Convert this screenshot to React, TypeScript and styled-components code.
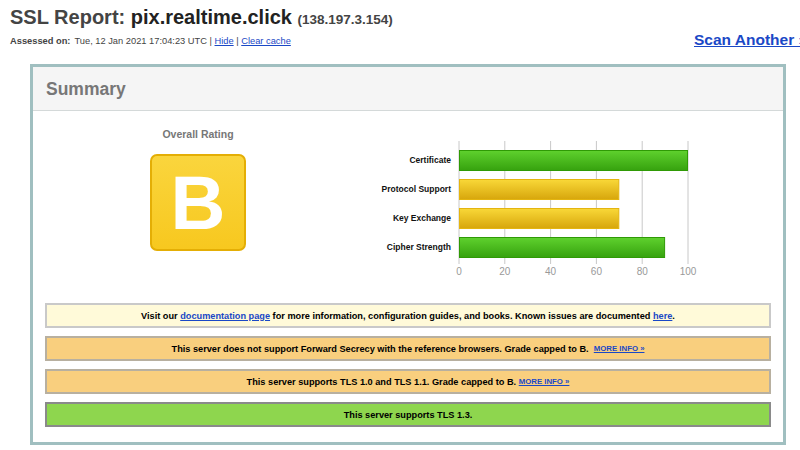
import React from 'react';
import styled, { createGlobalStyle } from 'styled-components';

const GlobalStyle = createGlobalStyle`
  html, body {
    margin: 0;
    padding: 0;
    overflow: hidden;
    background: #fff;
    font-family: "Liberation Sans", Arial, sans-serif;
  }
`;

const Page = styled.div`
  width: 820px;
  padding: 6px 0 0 10px;
`;

const TopBar = styled.div`
  display: flex;
  align-items: flex-start;
`;

const TitleBlock = styled.div`
  display: flex;
  flex-direction: column;
`;

const Title = styled.h1`
  margin: 0;
  font-size: 20px;
  line-height: 22px;
  font-weight: bold;
  color: #222;
`;

const TitleLead = styled.span`
  color: #444;
`;

const Ip = styled.span`
  font-size: 13.5px;
  color: #444;
`;

const Assessed = styled.div`
  margin-top: 5px;
  font-size: 9.3px;
  color: #444;

  b {
    margin-right: 4px;
  }
`;

const SmallLink = styled.a`
  color: #1a48c6;
  text-decoration: underline;
`;

const ScanAnother = styled.a`
  margin: 25px 0 0 auto;
  width: 136px;
  white-space: nowrap;
  font-size: 15.5px;
  font-weight: bold;
  color: #1a48c6;
  text-decoration: underline;
`;

const SummaryBox = styled.section`
  margin: 15px 0 0 20px;
  width: 750px;
  border: 3px solid #a0bfc0;
  background: #fff;
`;

const SummaryHead = styled.div`
  height: 44px;
  display: flex;
  align-items: center;
  padding: 2px 0 0 13px;
  box-sizing: border-box;
  background: #f5f5f5;
  border-bottom: 1px solid #d4d9d9;
  font-size: 17.5px;
  font-weight: bold;
  color: #777;
`;

const SummaryBody = styled.div`
  padding: 17px 12px 15px 12px;
`;

const TopRow = styled.div`
  display: flex;
  align-items: flex-start;
`;

const RatingColumn = styled.div`
  width: 306px;
  display: flex;
  flex-direction: column;
  align-items: center;
`;

const RatingLabel = styled.div`
  font-size: 10.5px;
  font-weight: bold;
  color: #777;
  line-height: 13px;
`;

const Grade = styled.div<{ $color: string; $edge: string }>`
  margin-top: 13px;
  width: 92px;
  height: 93px;
  border: 2px solid ${(p) => p.$edge};
  border-radius: 7px;
  background: ${(p) => p.$color};
  display: flex;
  align-items: center;
  justify-content: center;
  color: #fff;
  font-size: 76px;
  font-weight: bold;
  line-height: 1;
`;

const ChartWrap = styled.div`
  margin-top: 6px;
`;

const Notices = styled.div`
  margin-top: 20px;
  display: flex;
  flex-direction: column;
  gap: 8px;
`;

const Notice = styled.div<{ $bg: string; $edge: string }>`
  height: 21px;
  display: flex;
  align-items: center;
  justify-content: center;
  background: ${(p) => p.$bg};
  border: 2px solid ${(p) => p.$edge};
  font-size: 9.2px;
  font-weight: bold;
  color: #000;
  white-space: pre;
`;

const MoreInfo = styled.a`
  font-size: 7.8px;
  color: #1a48c6;
  text-decoration: underline;
`;

const bars = [
  { label: 'Certificate', value: 100, tone: 'green' },
  { label: 'Protocol Support', value: 70, tone: 'yellow' },
  { label: 'Key Exchange', value: 70, tone: 'yellow' },
  { label: 'Cipher Strength', value: 90, tone: 'green' },
];

const Chart = () => {
  const x0 = 108;
  const scale = 2.29;
  const ticks = [0, 20, 40, 60, 80, 100];
  return (
    <svg width="360" height="145" viewBox="0 0 360 145">
      <defs>
        <linearGradient id="g-green" x1="0" y1="0" x2="0" y2="1">
          <stop offset="0" stopColor="#5fd12e" />
          <stop offset="1" stopColor="#36a20e" />
        </linearGradient>
        <linearGradient id="g-yellow" x1="0" y1="0" x2="0" y2="1">
          <stop offset="0" stopColor="#f9d838" />
          <stop offset="1" stopColor="#d7a60c" />
        </linearGradient>
      </defs>
      {ticks.map((t) => {
        const x = x0 + t * scale;
        return (
          <g key={t}>
            <line x1={x} y1={7} x2={x} y2={130} stroke="#c8c8c8" strokeWidth="1" />
            <text
              x={x}
              y={141}
              textAnchor="middle"
              fontSize="10"
              fill="#999"
              fontFamily="Liberation Sans, Arial, sans-serif"
            >
              {t}
            </text>
          </g>
        );
      })}
      {bars.map((b, i) => {
        const y = 16 + i * 29;
        const green = b.tone === 'green';
        return (
          <g key={b.label}>
            <text
              x={x0 - 8}
              y={y + 13}
              textAnchor="end"
              fontSize="8.5"
              fontWeight="bold"
              fill="#111"
              fontFamily="Liberation Sans, Arial, sans-serif"
            >
              {b.label}
            </text>
            <rect
              x={x0 + 0.5}
              y={y + 0.5}
              width={b.value * scale - 1}
              height={20}
              fill={green ? 'url(#g-green)' : 'url(#g-yellow)'}
              stroke={green ? '#2f9a05' : '#e4b510'}
              strokeWidth="1"
            />
          </g>
        );
      })}
    </svg>
  );
};

export default function App() {
  return (
    <>
      <GlobalStyle />
      <Page>
        <TopBar>
          <TitleBlock>
            <Title>
              <TitleLead>SSL Report:</TitleLead> pix.realtime.click <Ip>(138.197.3.154)</Ip>
            </Title>
            <Assessed>
              <b>Assessed on:</b>Tue, 12 Jan 2021 17:04:23 UTC | <SmallLink href="#">Hide</SmallLink> |{' '}
              <SmallLink href="#">Clear cache</SmallLink>
            </Assessed>
          </TitleBlock>
          <ScanAnother href="#">Scan Another »</ScanAnother>
        </TopBar>

        <SummaryBox>
          <SummaryHead>Summary</SummaryHead>
          <SummaryBody>
            <TopRow>
              <RatingColumn>
                <RatingLabel>Overall Rating</RatingLabel>
                <Grade
                  $color="linear-gradient(180deg, #fad53d 0%, #f7c81f 100%)"
                  $edge="#e4ae05"
                >
                  B
                </Grade>
              </RatingColumn>
              <ChartWrap>
                <Chart />
              </ChartWrap>
            </TopRow>

            <Notices>
              <Notice $bg="#fffad9" $edge="#c9c9c9">
                Visit our <SmallLink href="#">documentation page</SmallLink> for more information,
                configuration guides, and books. Known issues are documented{' '}
                <SmallLink href="#">here</SmallLink>.
              </Notice>
              <Notice $bg="#f9cf7e" $edge="#b8b0a0">
                This server does not support Forward Secrecy with the reference browsers. Grade capped
                to B.  <MoreInfo href="#">MORE INFO »</MoreInfo>
              </Notice>
              <Notice $bg="#f9cf7e" $edge="#b8b0a0">
                This server supports TLS 1.0 and TLS 1.1. Grade capped to B. <MoreInfo href="#">MORE INFO »</MoreInfo>
              </Notice>
              <Notice $bg="#8ed64e" $edge="#8a8a8a">
                This server supports TLS 1.3.
              </Notice>
            </Notices>
          </SummaryBody>
        </SummaryBox>
      </Page>
    </>
  );
}
